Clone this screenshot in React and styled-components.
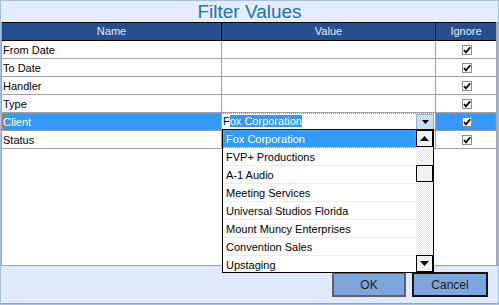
import React from 'react';
import styled, { createGlobalStyle } from 'styled-components';

const GlobalStyle = createGlobalStyle`
    html, body {
        margin: 0;
        padding: 0;
        background: #ffffff;
    }
    body {
        font-family: "Liberation Sans", Arial, sans-serif;
        font-size: 11px;
        color: #000;
    }
`;

const COLS = '220px 214px 60px';

const Window = styled.div`
    width: 499px;
    height: 305px;
    box-sizing: border-box;
    border: 1px solid #a9c0e6;
    display: flex;
    flex-direction: column;
    background: #fff;
`;

const TitleBar = styled.div`
    height: 21px;
    flex: none;
    background: #e3edfb;
    color: #2271b7;
    font-size: 19px;
    line-height: 21px;
    text-align: center;
`;

const Body = styled.div`
    flex: 1;
    position: relative;
    border-left: 1px solid #a0a0a0;
    border-right: 2px solid #a8a8a8;
    background: #fff;
`;

const HeaderRow = styled.div`
    display: grid;
    grid-template-columns: ${COLS};
    height: 19px;
    box-sizing: border-box;
    border-top: 1px solid #000;
    border-bottom: 1px solid #000;
    background: #24508f;
`;

const HeaderCell = styled.div`
    box-sizing: border-box;
    border-right: ${props => props.last ? 'none' : '1px solid #000'};
    color: #e4ebf8;
    line-height: 17px;
    text-align: center;
`;

const Row = styled.div`
    display: grid;
    grid-template-columns: ${COLS};
    height: 18px;
    box-sizing: border-box;
    border-bottom: 1px solid #a0a0a0;
    background: ${props => props.selected ? '#3399ff' : '#fff'};
    color: ${props => props.selected ? '#fff' : '#000'};
    outline: ${props => props.selected ? '1px dotted #d08a48' : 'none'};
    outline-offset: -1px;
`;

const Cell = styled.div`
    box-sizing: border-box;
    border-right: ${props => props.last ? 'none' : '1px solid #a0a0a0'};
    padding: 1px 0 0 1px;
    line-height: 16px;
    white-space: nowrap;
    background: ${props => props.white ? '#fff' : 'transparent'};
    display: ${props => props.center ? 'flex' : 'block'};
    align-items: center;
    justify-content: center;
`;

const CheckBox = styled.span`
    width: 10px;
    height: 10px;
    box-sizing: border-box;
    border: 1px solid #8c8c8c;
    background: #fff;
    display: flex;
    align-items: center;
    justify-content: center;
    margin-top: -1px;
`;

const Combo = styled.div`
    position: relative;
    height: 17px;
    margin: -1px 0 0 -1px;
    display: flex;
    align-items: flex-start;
    padding-top: 1px;
    box-sizing: border-box;
    color: #000;
`;

const ComboText = styled.div`
    flex: 1;
    line-height: 15px;
    padding-left: 1px;
`;

const Sel = styled.span`
    background: #3399ff;
    color: #fff;
`;

const DropBtn = styled.div`
    width: 18px;
    height: 16px;
    box-sizing: border-box;
    margin-right: 1px;
    background: #c6ddf8;
    border: 1px solid #8db3e2;
    display: flex;
    align-items: center;
    justify-content: center;
`;

const DropList = styled.div`
    position: absolute;
    left: 0;
    top: 16px;
    width: 212px;
    height: 144px;
    box-sizing: border-box;
    border: 1px solid #000;
    background: #fff;
    display: flex;
    overflow: hidden;
    z-index: 2;
`;

const Items = styled.div`
    flex: 1;
    display: flex;
    flex-direction: column;
`;

const Item = styled.div`
    height: 18px;
    flex: none;
    box-sizing: border-box;
    padding: 1px 0 0 3px;
    line-height: 16px;
    white-space: nowrap;
    border-bottom: 1px solid #ececec;
    background: ${props => props.active ? '#3399ff' : '#fff'};
    color: ${props => props.active ? '#fff' : '#000'};
    outline: ${props => props.active ? '1px dotted #d08a48' : 'none'};
    outline-offset: -1px;
`;

const ScrollBar = styled.div`
    width: 17px;
    flex: none;
    display: flex;
    flex-direction: column;
    background: repeating-conic-gradient(#e4e4e4 0% 25%, #ffffff 0% 50%) 0 0 / 2px 2px;
`;

const ScrollBtn = styled.div`
    height: 17px;
    flex: none;
    box-sizing: border-box;
    border: 1px solid #000;
    background: #f0f0f0;
    display: flex;
    align-items: center;
    justify-content: center;
`;

const Track = styled.div`
    flex: 1;
`;

const Thumb = styled.div`
    height: 17px;
    margin-top: 18px;
    box-sizing: border-box;
    border: 1px solid #000;
    background: #f0f0f0;
`;

const Footer = styled.div`
    height: 39px;
    flex: none;
    box-sizing: border-box;
    border-top: 1px solid #a0a0a0;
    border-bottom: 1px solid #a0a0a0;
    background: #dfeafc;
    display: flex;
    justify-content: flex-end;
    align-items: flex-start;
    gap: 6px;
    padding: 6px 10px 0 0;
`;

const Button = styled.button`
    width: ${props => props.w}px;
    height: 25px;
    box-sizing: border-box;
    border: 2px solid ${props => props.focused ? '#626262' : '#151515'};
    background: #7ca6e0;
    color: #1c1c1c;
    font-family: "Liberation Sans", Arial, sans-serif;
    font-size: 12px;
    padding: 0;
    margin: 0;
`;

const Triangle = ({ up, w = 9, h = 5 }) => (
    <svg width={w} height={h} viewBox={`0 0 ${w} ${h}`}>
        <polygon points={up ? `0,${h} ${w},${h} ${w / 2},0` : `0,0 ${w},0 ${w / 2},${h}`} fill="#000" />
    </svg>
);

const Check = () => (
    <svg width="8" height="8" viewBox="0 0 8 8">
        <path d="M1 4 L3 6.3 L7.2 1.2" fill="none" stroke="#000" strokeWidth="1.8" />
    </svg>
);

const rows = ['From Date', 'To Date', 'Handler', 'Type', 'Client', 'Status'];

const clients = [
    'Fox Corporation',
    'FVP+ Productions',
    'A-1 Audio',
    'Meeting Services',
    'Universal Studios Florida',
    'Mount Muncy Enterprises',
    'Convention Sales',
    'Upstaging',
];

const ClientCombo = () => (
    <Combo>
        <ComboText>F<Sel>ox Corporation</Sel></ComboText>
        <DropBtn><Triangle w={7} h={4} /></DropBtn>
        <DropList>
            <Items>
                {clients.map((c, i) => (
                    <Item key={c} active={i === 0}>{c}</Item>
                ))}
            </Items>
            <ScrollBar>
                <ScrollBtn><Triangle up /></ScrollBtn>
                <Track><Thumb /></Track>
                <ScrollBtn><Triangle /></ScrollBtn>
            </ScrollBar>
        </DropList>
    </Combo>
);

export default function App() {
    return (
        <>
            <GlobalStyle />
            <Window>
                <TitleBar>Filter Values</TitleBar>
                <Body>
                    <HeaderRow>
                        <HeaderCell>Name</HeaderCell>
                        <HeaderCell>Value</HeaderCell>
                        <HeaderCell last>Ignore</HeaderCell>
                    </HeaderRow>
                    {rows.map(name => {
                        const selected = name === 'Client';
                        return (
                            <Row key={name} selected={selected}>
                                <Cell>{name}</Cell>
                                <Cell white={selected}>{selected && <ClientCombo />}</Cell>
                                <Cell last center><CheckBox><Check /></CheckBox></Cell>
                            </Row>
                        );
                    })}
                </Body>
                <Footer>
                    <Button w={74} focused>OK</Button>
                    <Button w={76}>Cancel</Button>
                </Footer>
            </Window>
        </>
    );
}
